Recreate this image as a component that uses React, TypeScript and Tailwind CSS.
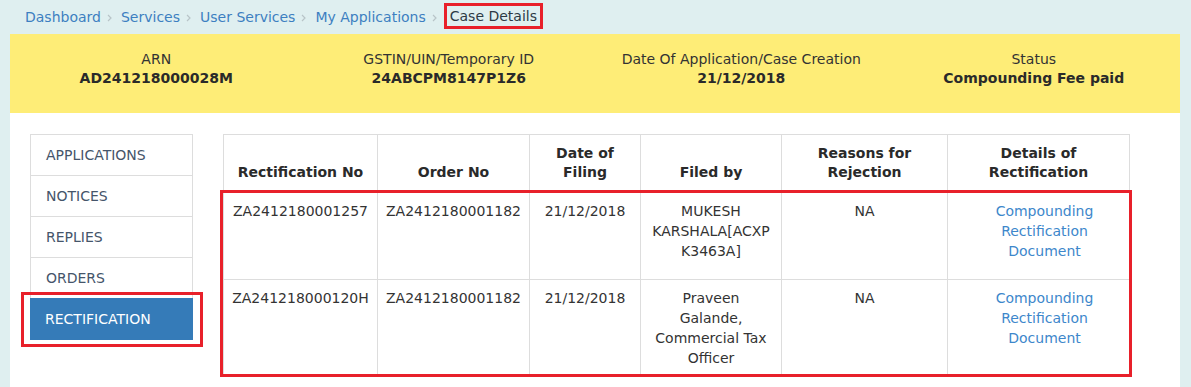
import React from "react";

const Chevron = () => (
  <svg width="5" height="8" viewBox="0 0 5 8" className="mx-[6px] mt-[1px]">
    <path d="M1 1 L4 4 L1 7" stroke="#b8c4c8" strokeWidth="1.2" fill="none" />
  </svg>
);

const crumbs = ["Dashboard", "Services", "User Services", "My Applications"];

const info = [
  { label: "ARN", value: "AD241218000028M" },
  { label: "GSTIN/UIN/Temporary ID", value: "24ABCPM8147P1Z6" },
  { label: "Date Of Application/Case Creation", value: "21/12/2018" },
  { label: "Status", value: "Compounding Fee paid" },
];

const navItems = ["APPLICATIONS", "NOTICES", "REPLIES", "ORDERS"];

const rows = [
  {
    rect: "ZA2412180001257",
    order: "ZA2412180001182",
    date: "21/12/2018",
    filed: ["MUKESH", "KARSHALA[ACXP", "K3463A]"],
    h: "h-[89px]",
  },
  {
    rect: "ZA241218000120H",
    order: "ZA2412180001182",
    date: "21/12/2018",
    filed: ["Praveen", "Galande,", "Commercial Tax", "Officer"],
    h: "h-[97px]",
  },
];

export default function App() {
  return (
    <div
      className="min-h-[387px] bg-[#dfeff0] pl-[10px] pr-[11px] text-[14px] leading-[20px] text-[#333]"
      style={{ fontFamily: '"DejaVu Sans", Verdana, sans-serif' }}
    >
      {/* Breadcrumb */}
      <div className="flex h-[34px] items-center pl-[15px]">
        {crumbs.map((c) => (
          <React.Fragment key={c}>
            <span className="text-[#3d7fc1]">{c}</span>
            <Chevron />
            <span className="w-[3px]" />
          </React.Fragment>
        ))}
        <span className="-mt-[3px] -ml-[2px] flex h-[26px] items-center border-[3px] border-[#e8202a] px-[3px] text-[#2d3a45]">
          Case Details
        </span>
      </div>

      {/* Yellow info band */}
      <div className="grid h-[79px] grid-cols-4 bg-[#feed77] pt-[15px] text-center">
        {info.map((i) => (
          <div key={i.label} className="flex flex-col">
            <span className="leading-[20px] text-[#333]">{i.label}</span>
            <span className="font-bold leading-[18px] text-[#2a2a2a]">{i.value}</span>
          </div>
        ))}
      </div>

      {/* Main white panel */}
      <div className="flex h-[274px] bg-white pl-[20px] pt-[21px]">
        {/* Left nav */}
        <div className="flex w-[163px] flex-col">
          {navItems.map((n) => (
            <div
              key={n}
              className="flex h-[41px] items-center border-x border-t border-[#dddddd] pl-[15px] text-[#45556a]"
            >
              {n}
            </div>
          ))}
          <div className="relative flex h-[42px] items-center bg-[#357bb8] pl-[15px] text-white">
            RECTIFICATION
            <div className="absolute -bottom-[7px] -left-[9px] -right-[10px] -top-[6px] border-[3px] border-[#e8202a]" />
          </div>
        </div>

        {/* Table */}
        <div className="relative ml-[30px] w-[906px] self-start">
          <table className="w-[906px] table-fixed border-collapse">
            <colgroup>
              <col className="w-[154px]" />
              <col className="w-[152px]" />
              <col className="w-[111px]" />
              <col className="w-[141px]" />
              <col className="w-[166px]" />
              <col className="w-[182px]" />
            </colgroup>
            <thead>
              <tr className="h-[56px]">
                {[
                  ["Rectification No"],
                  ["Order No"],
                  ["Date of", "Filing"],
                  ["Filed by"],
                  ["Reasons for", "Rejection"],
                  ["Details of", "Rectification"],
                ].map((h, i) => (
                  <th
                    key={i}
                    className="border border-[#dddddd] px-[8px] pb-[8px] align-bottom text-center font-bold leading-[19px] text-[#2a2a2a]"
                  >
                    {h.map((l) => (
                      <div key={l}>{l}</div>
                    ))}
                  </th>
                ))}
              </tr>
            </thead>
            <tbody>
              {rows.map((r, idx) => (
                <tr key={r.rect} className={r.h}>
                  {[r.rect, r.order, r.date].map((v, j) => (
                    <td
                      key={j}
                      className={`border border-[#dddddd] px-[8px] align-top text-center ${idx === 0 ? "pt-[10px]" : "pt-[8px]"}`}
                    >
                      {v}
                    </td>
                  ))}
                  <td
                    className={`border border-[#dddddd] px-[4px] align-top text-center ${idx === 0 ? "pt-[10px]" : "pt-[8px]"}`}
                  >
                    {r.filed.map((f) => (
                      <div key={f}>{f}</div>
                    ))}
                  </td>
                  <td
                    className={`border border-[#dddddd] px-[8px] align-top text-center ${idx === 0 ? "pt-[10px]" : "pt-[8px]"}`}
                  >
                    NA
                  </td>
                  <td
                    className={`border border-[#dddddd] px-[8px] align-top text-center text-[#3d87cb] ${idx === 0 ? "pt-[10px]" : "pt-[8px]"}`}
                  >
                    <div className="pl-[12px]">Compounding</div>
                    <div className="pl-[12px]">Rectification</div>
                    <div className="pl-[12px]">Document</div>
                  </td>
                </tr>
              ))}
            </tbody>
          </table>
          <div className="absolute bottom-0 -left-[3px] -right-[3px] top-[56px] border-[3px] border-[#e8202a]" />
        </div>
      </div>
    </div>
  );
}
